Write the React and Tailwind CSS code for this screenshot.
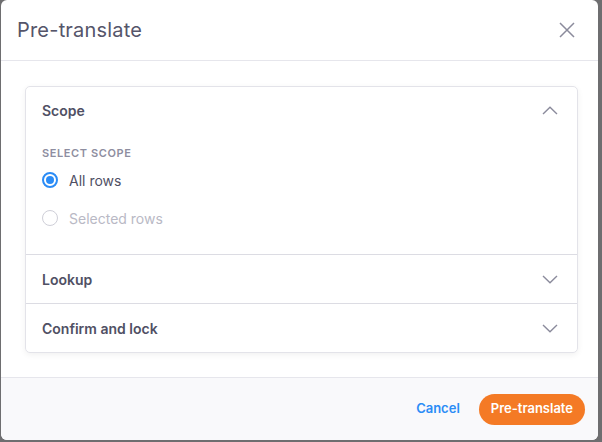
import React from "react";

function Chevron({ up }) {
  return (
    <svg width="16" height="9" viewBox="0 0 16 9" fill="none" className="text-[#8b8b9c]">
      {up ? (
        <path d="M1 8L8 1.2L15 8" stroke="currentColor" strokeWidth="1.4" />
      ) : (
        <path d="M1 1L8 7.8L15 1" stroke="currentColor" strokeWidth="1.4" />
      )}
    </svg>
  );
}

export default function App() {
  const font = { fontFamily: "Inter, 'Noto Sans', sans-serif" };
  return (
    <div className="w-[602px] h-[442px] bg-[#6e6e70] overflow-hidden" style={font}>
      <div className="ml-[1px] w-[597px] h-[440px] bg-white rounded-[6px] flex flex-col overflow-hidden">
        <div className="h-[61px] flex items-center justify-between pl-[16px] pr-[23px] border-b border-[#e6e6ec] shrink-0">
          <h1 className="text-[20px] text-[#55556a] font-normal tracking-[0.2px]">Pre-translate</h1>
          <svg width="16" height="16" viewBox="0 0 16 16" fill="none" className="text-[#8b8b9c]">
            <path d="M1 1L15 15M15 1L1 15" stroke="currentColor" strokeWidth="1.5" />
          </svg>
        </div>
        <div className="flex-1 pl-[24px] pr-[20px] pt-[25px]">
          <div className="border border-[#e3e3e9] rounded-[5px] shadow-[0_2px_6px_rgba(0,0,0,0.06)] bg-white">
            <div className="h-[46px] flex items-center justify-between pl-[16px] pr-[19px]">
              <span className="text-[14px] font-semibold text-[#505064]">Scope</span>
              <Chevron up />
            </div>
            <div className="pl-[16px] pt-[13px] pb-[24px]">
              <div className="text-[11px] font-semibold tracking-[0.6px] text-[#8e8ea0] uppercase leading-[14px]">
                Select scope
              </div>
              <div className="flex items-center gap-[11px] mt-[8px] h-[24px]">
                <span className="w-[16px] h-[16px] rounded-full border-[2px] border-[#2b8cf6] flex items-center justify-center">
                  <span className="w-[8px] h-[8px] rounded-full bg-[#2b8cf6]" />
                </span>
                <span className="text-[14px] text-[#505064]">All rows</span>
              </div>
              <div className="flex items-center gap-[11px] mt-[14px] h-[24px]">
                <span className="w-[16px] h-[16px] rounded-full border-[1.5px] border-[#cfcfd8]" />
                <span className="text-[14px] text-[#b9b9c5]">Selected rows</span>
              </div>
            </div>
            <div className="h-[49px] border-t border-[#dcdce3] flex items-center justify-between pl-[16px] pr-[19px]">
              <span className="text-[14px] font-semibold text-[#505064]">Lookup</span>
              <Chevron />
            </div>
            <div className="h-[49px] border-t border-[#dcdce3] flex items-center justify-between pl-[16px] pr-[19px]">
              <span className="text-[14px] font-semibold text-[#505064]">Confirm and lock</span>
              <Chevron />
            </div>
          </div>
        </div>
        <div className="h-[63px] shrink-0 border-t border-[#e6e6ec] bg-[#f9f9fb] flex items-center justify-end pr-[13px] gap-[19px]">
          <span className="text-[13px] font-semibold text-[#2b8cf6]">Cancel</span>
          <button className="h-[31px] px-[12px] rounded-full bg-[#f47a25] text-white text-[13px] font-semibold">
            Pre-translate
          </button>
        </div>
      </div>
    </div>
  );
}
